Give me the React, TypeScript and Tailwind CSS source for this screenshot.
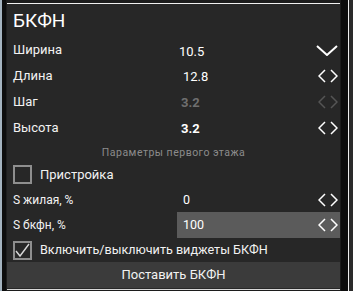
import React from "react";

const Arrows = ({ color = "#ffffff" }: { color?: string }) => (
  <svg width="20" height="14" viewBox="0 0 20 14" fill="none">
    <polyline points="7,1 1,7 7,13" stroke={color} strokeWidth="1.5" />
    <polyline points="13,1 19,7 13,13" stroke={color} strokeWidth="1.5" />
  </svg>
);

const ChevronDown = () => (
  <svg width="22" height="11" viewBox="0 0 22 11" fill="none">
    <polyline points="1,1 11,10 21,1" stroke="#ffffff" strokeWidth="2" />
  </svg>
);

const Box = ({ checked }: { checked?: boolean }) => (
  <div className="w-[19px] h-[19px] border-2 border-[#8e8e8e] flex items-center justify-center shrink-0">
    {checked && (
      <svg width="15" height="15" viewBox="0 0 15 15" fill="none">
        <polyline points="1,8 5,13 14,1" stroke="#d8d8d8" strokeWidth="1.4" />
      </svg>
    )}
  </div>
);

type RowProps = {
  label: string;
  value: string;
  valueCls?: string;
  icon: React.ReactNode;
  h?: string;
  labelCls?: string;
  boxed?: boolean;
};

const Row = ({ label, value, valueCls, icon, h = "h-[26px]", labelCls = "text-[13px]", boxed }: RowProps) => (
  <div className={`flex items-center ${h}`}>
    <div className={`w-[170px] pl-[6px] text-[#f2f2f2] ${labelCls}`}>{label}</div>
    <div className={`flex-1 h-full flex items-center pr-[2px] ${boxed ? "bg-[#5b5b5b]" : ""}`}>
      <div className={`flex-1 ${valueCls ?? ""}`}>{value}</div>
      <div className="w-[22px] flex justify-end">{icon}</div>
    </div>
  </div>
);

export default function App() {
  return (
    <div
      className="w-[353px] h-[291px] flex bg-[#101010] overflow-hidden"
      style={{ fontFamily: "Roboto, 'Noto Sans', sans-serif" }}
    >
      <div className="w-[2px] h-full bg-[#a4b3bf]" />
      <div className="w-[4px] h-full bg-[#0d0d0d]" />
      <div className="w-[335px] h-full bg-[#1c1c1c] px-[1px] flex flex-col">
        <div className="h-[3px]" />
        <div className="h-[1px] bg-[#f0f0f0]" />
        <div className="flex-1 bg-[#272727] flex flex-col">
          <div className="h-[33px] flex items-center pl-[6px] text-[19px] text-white leading-none">БКФН</div>
          <Row
            label="Ширина"
            value="10.5"
            valueCls="pl-[2px] pt-[3px] text-[13px] text-white"
            icon={<ChevronDown />}
          />
          <Row label="Длина" value="12.8" valueCls="pl-[6px] pt-[1px] text-[13px] text-white" icon={<Arrows />} />
          <Row
            label="Шаг"
            value="3.2"
            valueCls="pl-[4px] pt-[1px] text-[13px] font-bold text-[#6f6f6f]"
            icon={<Arrows color="#555555" />}
          />
          <Row label="Высота" value="3.2" valueCls="pl-[4px] pt-[1px] text-[13px] font-bold text-white" icon={<Arrows />} />
          <div className="h-[22px] pt-[2px] flex items-center justify-center text-[10.5px] tracking-[0.5px] text-[#8c8c8c]">
            Параметры первого этажа
          </div>
          <div className="h-[25px] flex items-start pt-[2px] pl-[6px] gap-[8px]">
            <Box />
            <span className="text-[13px] text-[#f2f2f2] leading-[19px]">Пристройка</span>
          </div>
          <Row
            label="S жилая, %"
            value="0"
            h="h-[24px]"
            labelCls="text-[12px]"
            valueCls="pl-[6px] text-[12.5px] text-white"
            icon={<Arrows />}
          />
          <Row
            label="S бкфн, %"
            value="100"
            labelCls="text-[12px]"
            boxed
            valueCls="pl-[6px] text-[12.5px] text-white"
            icon={<Arrows />}
          />
          <div className="h-[24px] flex items-center pl-[6px] gap-[8px] pt-[1px]">
            <Box checked />
            <span className="text-[12.6px] text-[#f2f2f2]">Включить/выключить виджеты БКФН</span>
          </div>
          <div className="h-[26px] bg-[#3b3b3b] flex items-center justify-center text-[13px] text-[#f2f2f2]">
            Поставить БКФН
          </div>
          <div className="h-[1px]" />
        </div>
        <div className="h-[1px] bg-[#d8d8d8]" />
        <div className="h-[1px]" />
      </div>
      <div className="w-[7px] h-full bg-[#0d0d0d]" />
      <div className="w-[1px] h-full bg-[#f0f0f0]" />
      <div className="flex-1 h-full bg-[#2a2a2a]" />
    </div>
  );
}
